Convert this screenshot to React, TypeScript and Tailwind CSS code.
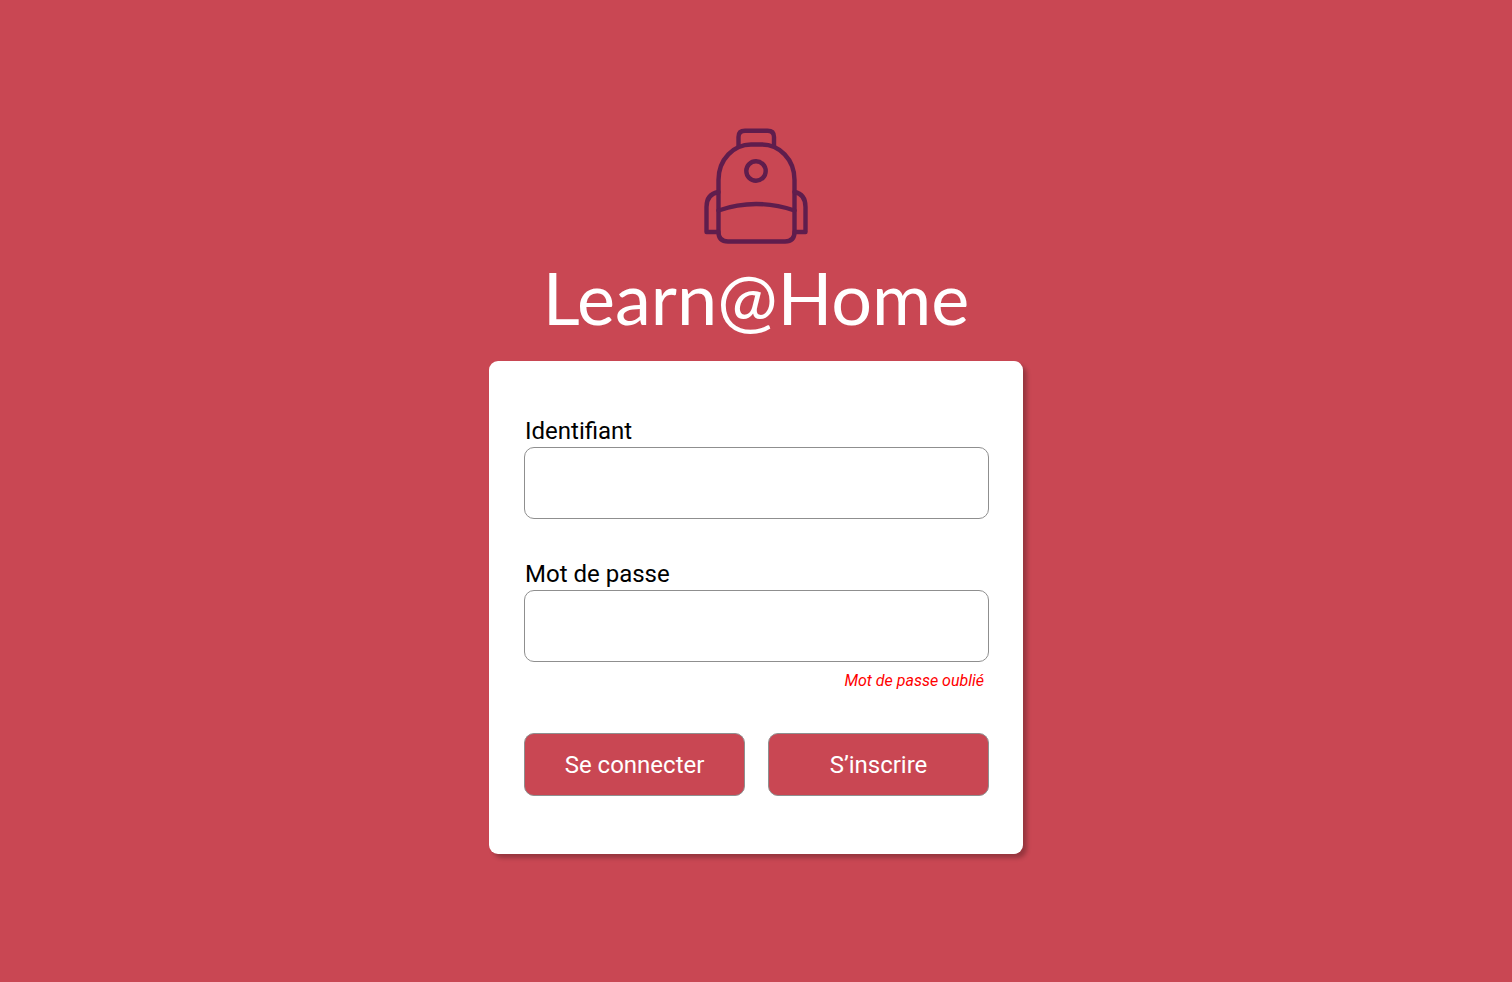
import type { FormEvent } from "react";

function Backpack() {
  return (
    <svg
      className="h-[116px] w-[104px]"
      viewBox="0 0 104 116"
      fill="none"
      stroke="#5f1d4d"
      strokeWidth="4.4"
      strokeLinecap="round"
      strokeLinejoin="round"
      aria-hidden="true"
    >
      <path d="M34.5 18V9Q34.5 2.8 41 2.8H63.5Q70 2.8 70 9V18" />
      <path d="M14.5 52C14.5 31 30 16.500 47 16.500H58C75 16.500 90.5 31 90.5 52V104Q90.5 113.500 81 113.500H24Q14.5 113.500 14.5 104Z" />
      <circle cx="52" cy="43" r="9.7" />
      <path d="M14.5 82.500Q52 69.500 90.5 82.500" />
      <path d="M14.500 64Q2.500 66 2.500 79V104H14.500" />
      <path d="M90.500 64Q101.500 66 101.500 79V104H90.500" />
    </svg>
  );
}

function Field({ id, label, type }: { id: string; label: string; type: string }) {
  return (
    <div className="flex flex-col">
      <label htmlFor={id} className="pl-px text-2xl leading-8 text-black">
        {label}
      </label>
      <input
        id={id}
        name={id}
        type={type}
        className="h-18 w-full rounded-[10px] border border-[#8f8f8f] bg-white px-4 text-2xl text-black"
      />
    </div>
  );
}

const buttonClass =
  "h-[63px] flex-1 rounded-[10px] border border-[#8f8f8f] bg-[#c94753] text-2xl text-white";

export default function App() {
  const handleSubmit = (event: FormEvent) => event.preventDefault();

  return (
    <main className="flex min-h-screen flex-col items-center justify-center bg-[#c94753] font-[Roboto,sans-serif]">
      <Backpack />
      <h1 className="mt-[17px] mb-7 font-[Lato,sans-serif] text-7xl leading-[72px] text-white">
        Learn@Home
      </h1>
      <form
        onSubmit={handleSubmit}
        className="w-full max-w-[534px] rounded-[9px] bg-white pt-[54px] pr-[34px] pb-[58px] pl-[35px] shadow-[4px_4px_4px_rgba(0,0,0,0.25)]"
      >
        <div className="flex flex-col gap-[39px]">
          <Field id="identifiant" label="Identifiant" type="text" />
          <Field id="mot-de-passe" label="Mot de passe" type="password" />
        </div>
        <div className="mt-[7px] flex justify-end pr-[5px]">
          <a href="#oublie" className="text-base leading-6 text-[#ff0000] italic">
            Mot de passe oublié
          </a>
        </div>
        <div className="mt-10 flex gap-[23px]">
          <button type="submit" className={buttonClass}>
            Se connecter
          </button>
          <button type="button" className={buttonClass}>
            S’inscrire
          </button>
        </div>
      </form>
    </main>
  );
}
